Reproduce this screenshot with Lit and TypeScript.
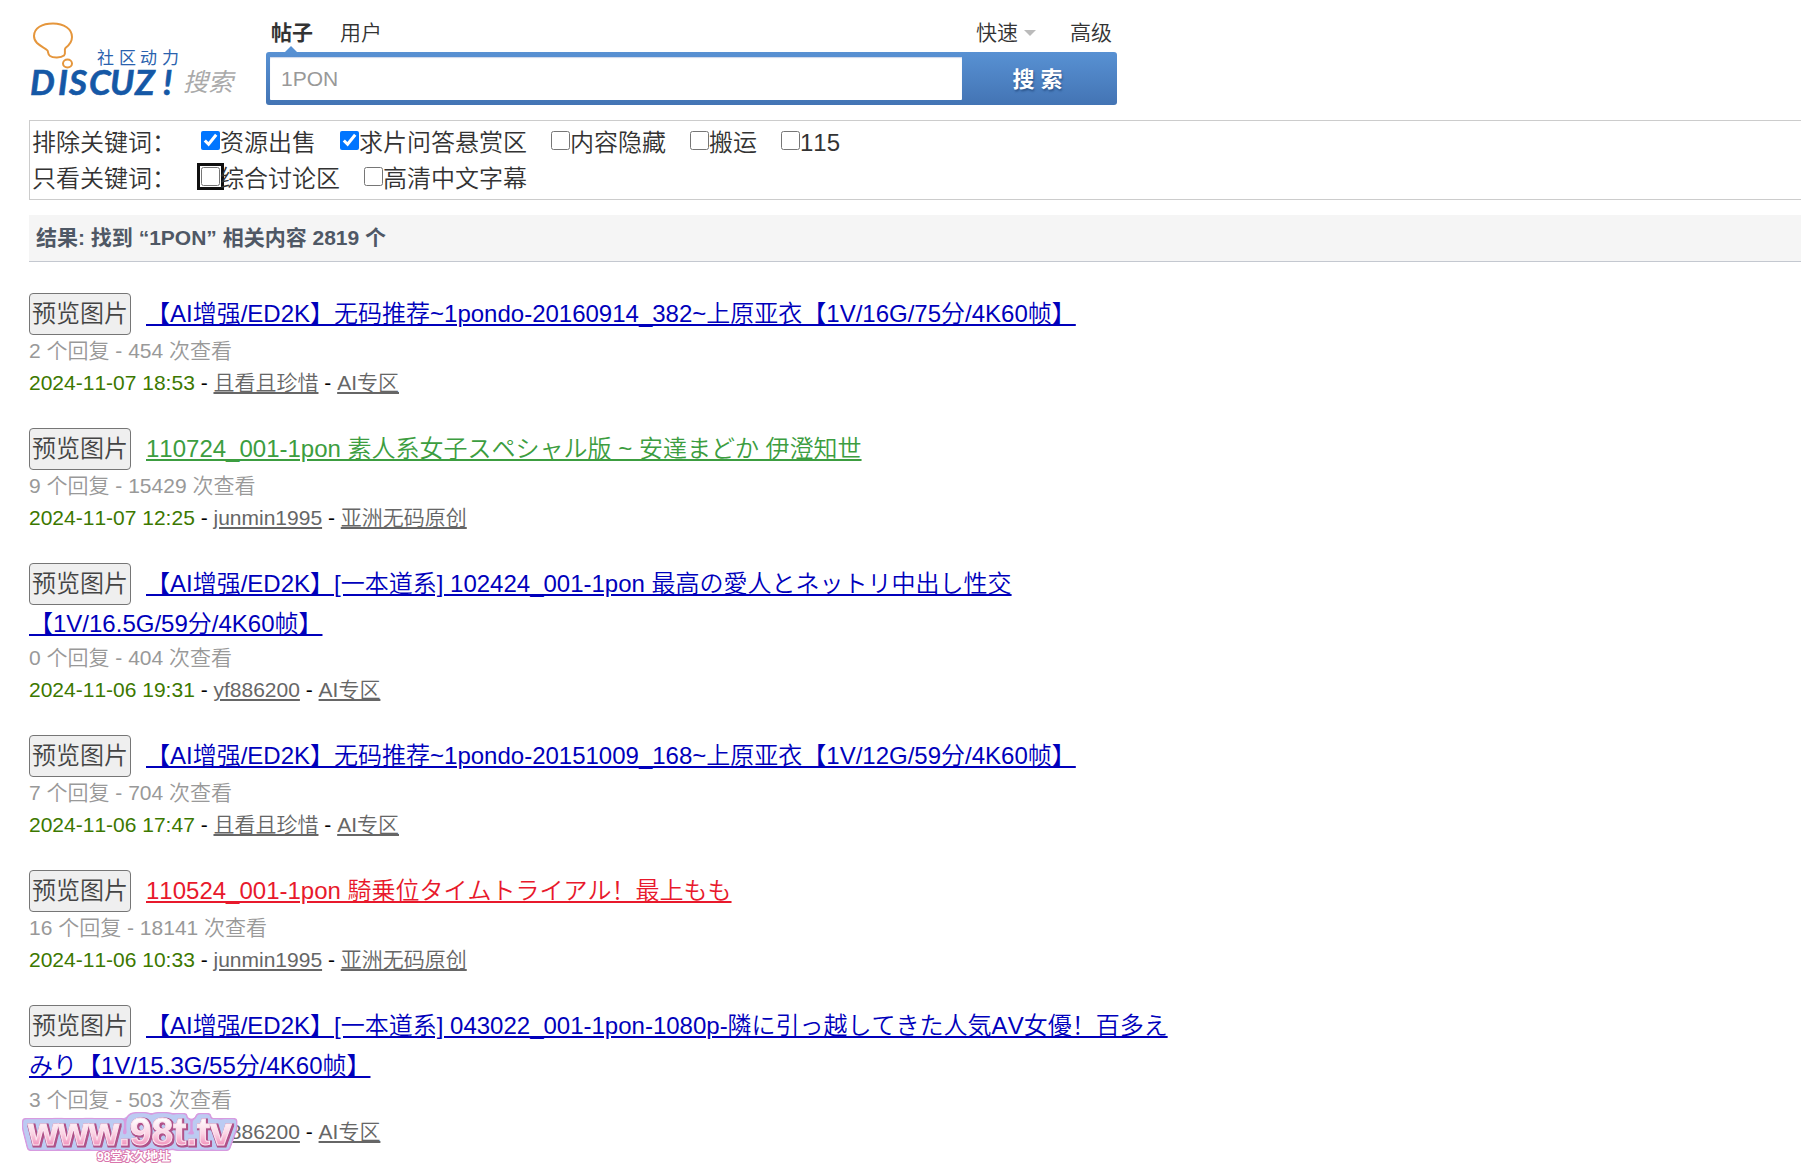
import { LitElement, html, css, nothing } from "lit";
import { customElement, property } from "lit/decorators.js";

interface Thread {
  title: string;
  tail?: string;
  tone?: "green" | "red";
  replies: number;
  views: number;
  date: string;
  author: string;
  forum: string;
}

interface Option {
  id: string;
  label: string;
  checked?: boolean;
  ring?: boolean;
}

const EXCLUDE: Option[] = [
  { id: "sale", label: "资源出售", checked: true },
  { id: "bounty", label: "求片问答悬赏区", checked: true },
  { id: "hidden", label: "内容隐藏" },
  { id: "repost", label: "搬运" },
  { id: "n115", label: "115" },
];

const ONLY: Option[] = [
  { id: "general", label: "综合讨论区", ring: true },
  { id: "subtitle", label: "高清中文字幕" },
];

const THREADS: Thread[] = [
  { title: "【AI增强/ED2K】无码推荐~1pondo-20160914_382~上原亚衣【1V/16G/75分/4K60帧】", replies: 2, views: 454, date: "2024-11-07 18:53", author: "且看且珍惜", forum: "AI专区" },
  { title: "110724_001-1pon 素人系女子スペシャル版 ~ 安達まどか 伊澄知世", tone: "green", replies: 9, views: 15429, date: "2024-11-07 12:25", author: "junmin1995", forum: "亚洲无码原创" },
  { title: "【AI增强/ED2K】[一本道系] 102424_001-1pon 最高の愛人とネットリ中出し性交", tail: "【1V/16.5G/59分/4K60帧】", replies: 0, views: 404, date: "2024-11-06 19:31", author: "yf886200", forum: "AI专区" },
  { title: "【AI增强/ED2K】无码推荐~1pondo-20151009_168~上原亚衣【1V/12G/59分/4K60帧】", replies: 7, views: 704, date: "2024-11-06 17:47", author: "且看且珍惜", forum: "AI专区" },
  { title: "110524_001-1pon 騎乗位タイムトライアル！最上もも", tone: "red", replies: 16, views: 18141, date: "2024-11-06 10:33", author: "junmin1995", forum: "亚洲无码原创" },
  { title: "【AI增强/ED2K】[一本道系] 043022_001-1pon-1080p-隣に引っ越してきた人気AV女優！百多えみり【1V/15.3G/55分/4K60帧】", replies: 3, views: 503, date: "2024-11-06 10:30", author: "yf886200", forum: "AI专区" },
];

@customElement("search-header")
export class SearchHeader extends LitElement {
  static styles = css`
    :host { display: flex; align-items: flex-start; }
    .logo { flex: 0 0 237px; height: 88px; }
    .logo svg { display: block; }
    .cjk { font-family: "Noto Sans CJK SC", sans-serif; font-weight: 400; }
    .word { font-family: Lato, sans-serif; font-weight: 700; font-style: italic; }
    .panel { flex: 0 1 851px; min-width: 0; padding-top: 1px; }
    .tabs { display: flex; align-items: center; height: 32px; padding: 0 5px; line-height: 32px; font-size: 21px; }
    .tabs a { color: #333; text-decoration: none; margin-right: 27px; }
    .tabs a.on { font-weight: 700; position: relative; }
    .tabs a.on::after {
      content: ""; position: absolute; left: 14px; bottom: -3px;
      border: 6px solid transparent; border-top: 0; border-bottom-color: #5891d3;
    }
    .tabs .quick { margin-left: auto; margin-right: 34px; display: flex; align-items: center; gap: 6px; }
    .tabs .adv { margin-right: 0; }
    .caret { border: 6px solid transparent; border-bottom: 0; border-top-color: #bbb; }
    form {
      display: flex; height: 53px; margin-top: 3px; box-sizing: border-box; padding: 5px 0 5px 4px;
      border-radius: 3px; background: linear-gradient(#5891d3, #4374b4);
    }
    input {
      flex: 1; min-width: 0; border: 0; border-radius: 1px; padding: 0 11px; background: #fff; color: #999;
      font: 21px "Liberation Sans", "Noto Sans CJK SC", sans-serif; outline: 0;
      box-shadow: inset 0 1px 1px #ccd6ea;
    }
    button {
      flex: 0 0 155px; border: 0; padding: 0 4px 4px 0; background: none; color: #fff;
      font: 700 22px "Liberation Sans", "Noto Sans CJK SC", sans-serif;
      text-shadow: 1px 2px 2px #2d578f;
    }
  `;
  render() {
    return html`
      <a class="logo" href="#" aria-label="Discuz! 搜索">
        <svg width="216" height="88" viewBox="29 16 216 88">
          <path d="M47.500 50.500C45 47 34 45 34 36C34 28 42 23.500 53 23.500C64 23.500 72 29 72 37C72 43 68 46 65.500 48C63.500 50 66.500 53 64 55.500C61 58 53 58 50 56C47.500 54.500 48.500 52 47.500 50.500Z" fill="none" stroke="#e5963c" stroke-width="2" />
          <ellipse cx="67.500" cy="63.500" rx="4.500" ry="4" fill="none" stroke="#e5963c" stroke-width="2" />
          <text class="cjk" x="97 119 140 162" y="64" font-size="17" fill="#2a62ae">社区动力</text>
          <text class="word" x="30 58 69 89 110 135 163" y="95" font-size="35" fill="#1558a6" stroke="#1558a6" stroke-width="0.600">DISCUZ!</text>
          <text class="cjk" x="183" y="91" font-size="25" font-style="italic" fill="#aaa">搜索</text>
        </svg>
      </a>
      <div class="panel">
        <nav class="tabs">
          <a class="on" href="#">帖子</a>
          <a href="#">用户</a>
          <a class="quick" href="#">快速<span class="caret"></span></a>
          <a class="adv" href="#">高级</a>
        </nav>
        <form @submit=${(e: Event) => e.preventDefault()}>
          <input type="text" aria-label="搜索" value="1PON" />
          <button type="submit">搜 索</button>
        </form>
      </div>
    `;
  }
}

@customElement("filter-row")
export class FilterRow extends LitElement {
  @property() name = "";
  @property({ attribute: false }) options: Option[] = [];
  static styles = css`
    fieldset { display: flex; flex-wrap: wrap; column-gap: 24px; border: 0; margin: 0; padding: 0; line-height: 36px; }
    .name { margin-right: 1px; }
    .opt { display: flex; align-items: center; }
    input { width: 19px; height: 19px; margin: 0 0 6px; }
    .ring { outline: 3px solid #101010; outline-offset: 1px; border-radius: 4px; }
  `;
  render() {
    return html`
      <fieldset aria-label=${this.name}>
        <span class="name">${this.name}</span>
        ${this.options.map(
          (o) => html`<span class="opt"
            ><input type="checkbox" id=${o.id} class=${o.ring ? "ring" : nothing} .checked=${!!o.checked} /><label for=${o.id}>${o.label}</label></span
          >`
        )}
      </fieldset>
    `;
  }
}

@customElement("thread-item")
export class ThreadItem extends LitElement {
  @property({ attribute: false }) thread!: Thread;
  static styles = css`
    :host { display: block; }
    h3 { margin: 0; font-size: 24px; font-weight: inherit; line-height: 37px; }
    button {
      height: 42px; box-sizing: border-box; margin: 0 15px 0 0; padding: 0 2px;
      border: 1px solid #767676; border-radius: 4px; background: #efefef; color: #444;
      font: inherit; line-height: 38px; vertical-align: baseline;
    }
    h3 a { color: #00b; text-decoration-thickness: 2px; text-underline-offset: 2px; }
    h3 a.green { color: #3c9d40; }
    h3 a.red { color: #e8192c; }
    .tail { white-space: nowrap; }
    p { margin: 0; font-size: 21px; line-height: 32px; color: #000; }
    .stats { color: #999; }
    .date { color: #3c7800; }
    p a { color: #666; text-decoration-thickness: 2px; text-underline-offset: 2px; }
  `;
  render() {
    const t = this.thread;
    return html`
      <h3><button type="button">预览图片</button><a class=${t.tone ?? nothing} href="#">${t.title}${t.tail ? html`<wbr /><span class="tail">${t.tail}</span>` : nothing}</a></h3>
      <p class="stats">${t.replies} 个回复 - ${t.views} 次查看</p>
      <p><span class="date">${t.date}</span> - <a href="#">${t.author}</a> - <a href="#">${t.forum}</a></p>
    `;
  }
}

@customElement("app-root")
export class AppRoot extends LitElement {
  static styles = css`
    :host {
      display: block; position: relative; min-height: 100vh; box-sizing: border-box;
      padding: 16px 0 0 29px; background: #fff; color: #333;
      font: 350 24px "Liberation Sans", "Noto Sans CJK SC", "Noto Sans CJK JP", sans-serif;
      font-kerning: none;
    }
    .filters { margin-top: 15px; padding: 4px 3px 2px 2px; border: 1px solid #ccc; border-right: 0; }
    h2 {
      margin: 15px 0 31px; padding: 0 7px; font-size: 21px; line-height: 46px; font-weight: 700;
      color: #4f5865; background: #f5f5f5; border-bottom: 1px solid #c4c8d0;
    }
    .list { display: flex; flex-direction: column; gap: 29px; max-width: 1150px; }
    .mark { position: absolute; left: 20px; top: 1106px; pointer-events: none; }
    .mark text { font-weight: 700; }
    .big { font-family: "Liberation Sans", sans-serif; font-size: 39px; }
    .small { font-family: "Liberation Sans", "Noto Sans CJK SC", sans-serif; font-size: 12px; stroke-linejoin: round; }
  `;
  render() {
    return html`
      <search-header></search-header>
      <section class="filters">
        <filter-row name="排除关键词：" .options=${EXCLUDE}></filter-row>
        <filter-row name="只看关键词：" .options=${ONLY}></filter-row>
      </section>
      <h2>结果: 找到 “1PON” 相关内容 2819 个</h2>
      <main class="list">${THREADS.map((t) => html`<thread-item .thread=${t}></thread-item>`)}</main>
      <svg class="mark" width="224" height="62" viewBox="20 1106 224 62">
        <defs>
          <linearGradient id="pink" x1="0" y1="0" x2="0" y2="1">
            <stop offset="0.2" stop-color="#fff" />
            <stop offset="0.55" stop-color="#fbd3e4" />
            <stop offset="0.85" stop-color="#f08cb8" />
          </linearGradient>
          <filter id="halo" filterUnits="userSpaceOnUse" x="20" y="1106" width="224" height="62" color-interpolation-filters="sRGB">
            <feMorphology in="SourceAlpha" operator="dilate" radius="5" result="wide" />
            <feGaussianBlur in="wide" stdDeviation="1.500" result="wideSoft" />
            <feComponentTransfer in="wideSoft" result="wideEdge"><feFuncA type="linear" slope="5" intercept="-1.500" /></feComponentTransfer>
            <feFlood flood-color="#d79be0" /><feComposite in2="wideEdge" operator="in" result="violet" />
            <feMorphology in="SourceAlpha" operator="dilate" radius="4" result="mid" />
            <feGaussianBlur in="mid" stdDeviation="1.500" result="midSoft" />
            <feComponentTransfer in="midSoft" result="midEdge"><feFuncA type="linear" slope="5" intercept="-1.800" /></feComponentTransfer>
            <feFlood flood-color="#bccbf2" /><feComposite in2="midEdge" operator="in" result="blue" />
            <feMorphology in="SourceAlpha" operator="dilate" radius="1" result="near" />
            <feOffset in="near" dx="1" dy="1" result="nearShift" />
            <feFlood flood-color="#b05088" /><feComposite in2="nearShift" operator="in" result="plum" />
            <feMerge>
              <feMergeNode in="violet" /><feMergeNode in="blue" /><feMergeNode in="plum" /><feMergeNode in="SourceGraphic" />
            </feMerge>
          </filter>
        </defs>
        <path d="M30 1122H118Q132 1110 154 1116L170 1121H222Q230 1123 226 1132L218 1146H38Q28 1132 30 1122Z" fill="#bccbf2" />
        <text class="big" x="28" y="1145" fill="url(#pink)" stroke="#fbe6f0" stroke-width="1" filter="url(#halo)">www.98t.tv</text>
        <text class="small" x="97" y="1161" fill="#fff" stroke="#d974ac" stroke-width="2" paint-order="stroke">98堂永久地址</text>
      </svg>
    `;
  }
}
